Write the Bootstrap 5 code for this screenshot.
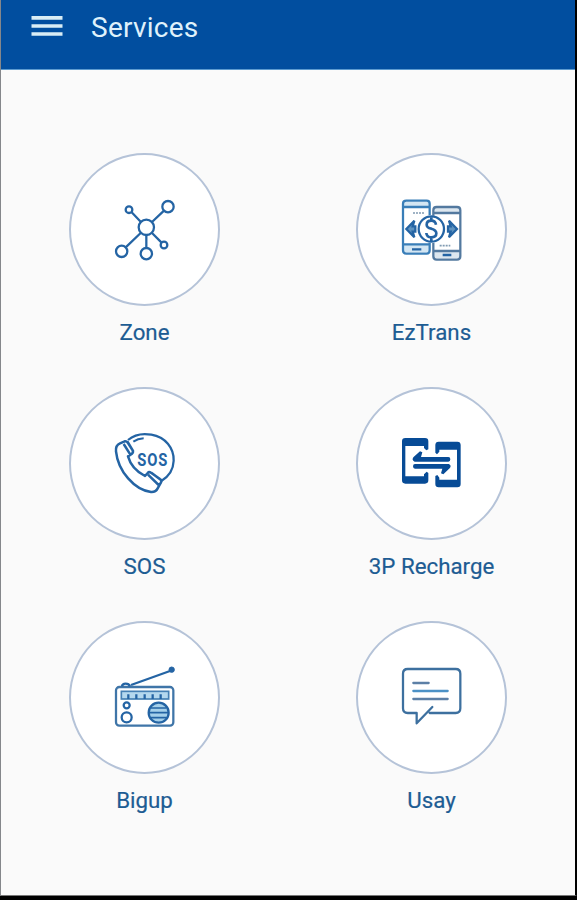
<!DOCTYPE html>
<html lang="en">
<head>
<meta charset="utf-8">
<meta name="viewport" content="width=device-width, initial-scale=1">
<title>Services</title>
<link href="https://cdn.jsdelivr.net/npm/bootstrap@5.3.0/dist/css/bootstrap.min.css" rel="stylesheet">
<style>
body{font-family:Roboto,"Liberation Sans",sans-serif;background:#000;height:900px;overflow:hidden}
.screen{height:896px;background:#fafafa;border-left:1px solid #85878b;border-right:2px solid #000;border-bottom:1px solid #777}
.topbar{height:70px;background:#014e9f;border-bottom:1px solid #5c9bd0;padding:0 0 14px 29px}
.topbar h1{font-size:28px;line-height:34px;color:#dff1fb;letter-spacing:.25px;margin-left:28px}
.menu-btn{width:33px;height:24px;margin-bottom:4px}
.services{padding-top:83px}
.service{height:233.9px;color:#1d5c93}
.disc{width:151px;height:153px;border:2px solid #b5c3d8;background:#fff}
.disc svg{width:90px;height:90px;margin-left:1px;fill:none;stroke:#2464a4;stroke-width:6.8}
.caption{font-size:22.3px;line-height:28px;margin-top:12px;-webkit-text-stroke:.2px}
</style>
</head>
<body>
<main class="screen">
<header class="topbar d-flex align-items-center">
<button class="btn p-0 border-0 d-flex menu-btn" aria-label="Menu"><svg width="33" height="24" viewBox="0 0 33 24" stroke="#d9edf5" stroke-width="3.7"><path d="M1.5 3.8h31M1.5 12h31M1.5 20h31"/></svg></button>
<h1 class="mb-0 fw-normal">Services</h1>
</header>
<div class="row row-cols-2 g-0 services">
<a class="col service d-flex flex-column align-items-center text-decoration-none" href="#">
<span class="disc rounded-circle d-flex align-items-center justify-content-center"><svg viewBox="0 0 270 270"><circle cx="139" cy="127" r="23"/><circle cx="204" cy="65" r="17"/><circle cx="87" cy="74" r="10"/><circle cx="65" cy="199" r="17"/><circle cx="139" cy="206" r="17"/><circle cx="192" cy="180" r="10"/><path d="M156 111l36-34M95 82l27 28M122 144l-45 43M139 151v38M156 144l28 28"/></svg></span>
<span class="caption">Zone</span></a>
<a class="col service d-flex flex-column align-items-center text-decoration-none" href="#">
<span class="disc rounded-circle d-flex align-items-center justify-content-center"><svg viewBox="0 0 270 270"><path d="M50 50h76v16H50zM50 178h76v24H50z" fill="#d3e6f3" stroke="none"/><path d="M141 69h77v15h-77zM141 198h77v22h-77z" fill="#dde7ef" stroke="none"/><path d="M128 90V56q0-9-9-9H58q-10 0-10 9v140q0 10 10 10h61q9 0 9-10v-23M48 66h80M48 178h80" stroke="#397eb8"/><path d="M139 92V76q0-10 10-10h61q10 0 10 10v138q0 10-10 10h-61q-10 0-10-10v-40M139 84h81M139 198h81" stroke="#53799f"/><circle cx="133" cy="132" r="38"/><path d="M147 119q-2-12-14-12-14 0-14 12 0 9 14 12 15 4 15 14 0 12-15 12-14 0-15-13M133 97v10M133 157v11" stroke-width="8"/><path d="M82 107l-24 25 24 25-5-17h8v-16h-8zM186 107l24 25-24 25 5-17h-8v-16h8z" fill="#5f93bf"/><path d="M75 193h28M167 210h26" stroke-width="7"/><path d="M78 84h34M158 182h32" stroke="#819bb2" stroke-width="5" stroke-dasharray="6 3"/></svg></span>
<span class="caption">EzTrans</span></a>
<a class="col service d-flex flex-column align-items-center text-decoration-none" href="#">
<span class="disc rounded-circle d-flex align-items-center justify-content-center"><svg viewBox="0 -4 270 270" stroke-linejoin="round"><path d="M84 62C104 45 132 42 154 46C196 53 222 86 221 124C220 149 206 171 185 184"/><path d="M60 72l14-6q6-1 10 5l14 22q3 6-3 11l-11 7c7 25 28 47 51 59l8-9q4-5 10-1l27 19q6 4 3 10l-10 18q-6 12-20 11C104 212 54 156 48 96q-2-18 12-24zM71 74l22 35M144 166l32 31M83 68l17 28M154 160l30 23" stroke-width="7.5"/><path d="M100 67q13-9 31-10" stroke-width="6"/><text transform="translate(112 140) scale(.82 1)" font-family="Roboto,sans-serif" font-size="54" font-weight="700" letter-spacing="3" fill="#2464a4" stroke="none">SOS</text></svg></span>
<span class="caption">SOS</span></a>
<a class="col service d-flex flex-column align-items-center text-decoration-none" href="#">
<span class="disc rounded-circle d-flex align-items-center justify-content-center"><svg viewBox="0 -4 270 270"><g fill="#074b96" stroke="none"><path fill-rule="evenodd" d="M55 56h59q10 0 10 10v24l-6 3-7-7V80H55v91h56v-6l8-8 5 4v22q0 10-10 10H55q-10 0-10-10V66q0-10 10-10z"/><path fill-rule="evenodd" d="M155 67h56q10 0 10 10v117q0 10-10 10h-56q-10 0-10-10v-24l6-3 6 8v6h53V91h-53v6l-7 8-5-5V77q0-10 10-10z"/><path d="M79 114l20-18 7 3-4 14h82q6 0 6 7t-6 7H83q-10-4-4-13zM188 147l-19 18-7-3 4-14H84q-6 0-6-7t6-7h101q10 4 3 13z"/></g></svg></span>
<span class="caption">3P Recharge</span></a>
<a class="col service d-flex flex-column align-items-center text-decoration-none" href="#">
<span class="disc rounded-circle d-flex align-items-center justify-content-center"><svg viewBox="0 0 270 270"><rect x="48" y="105" width="172" height="116" rx="10" stroke="#3f75a8"/><path d="M66 103q1-8 11-8t13 8M93 99L210 57" stroke-width="7"/><circle cx="215" cy="53" r="8" fill="#2464a4" stroke-width="3"/><rect x="64" y="118" width="142" height="23" fill="#b4d8ee" stroke="#4580b4" stroke-width="5"/><path d="M85 141v-14M109 141v-14M134 141v-14M158 141v-14M182 141v-14"/><circle cx="80" cy="160" r="9"/><circle cx="80" cy="196" r="15"/><circle cx="176" cy="182" r="30" fill="#a5d0ea"/><path d="M153 168h46M147 182h58M153 197h46" stroke-width="5"/></svg></span>
<span class="caption">Bigup</span></a>
<a class="col service d-flex flex-column align-items-center text-decoration-none" href="#">
<span class="disc rounded-circle d-flex align-items-center justify-content-center"><svg viewBox="0 0 270 270" stroke-linecap="round" stroke-linejoin="round"><path d="M136 165L89 214v-31H62q-14 0-14-14V65q0-14 14-14h144q14 0 14 14v104q0 14-14 14h-78" stroke="#3d709f"/><path d="M79 93h46M79 141h103" stroke="#5c7fa6"/><path d="M79 117h103" stroke="#4c91c6"/></svg></span>
<span class="caption">Usay</span></a>
</div>
</main>
<script src="https://cdn.jsdelivr.net/npm/bootstrap@5.3.0/dist/js/bootstrap.bundle.min.js"></script>
</body>
</html>
